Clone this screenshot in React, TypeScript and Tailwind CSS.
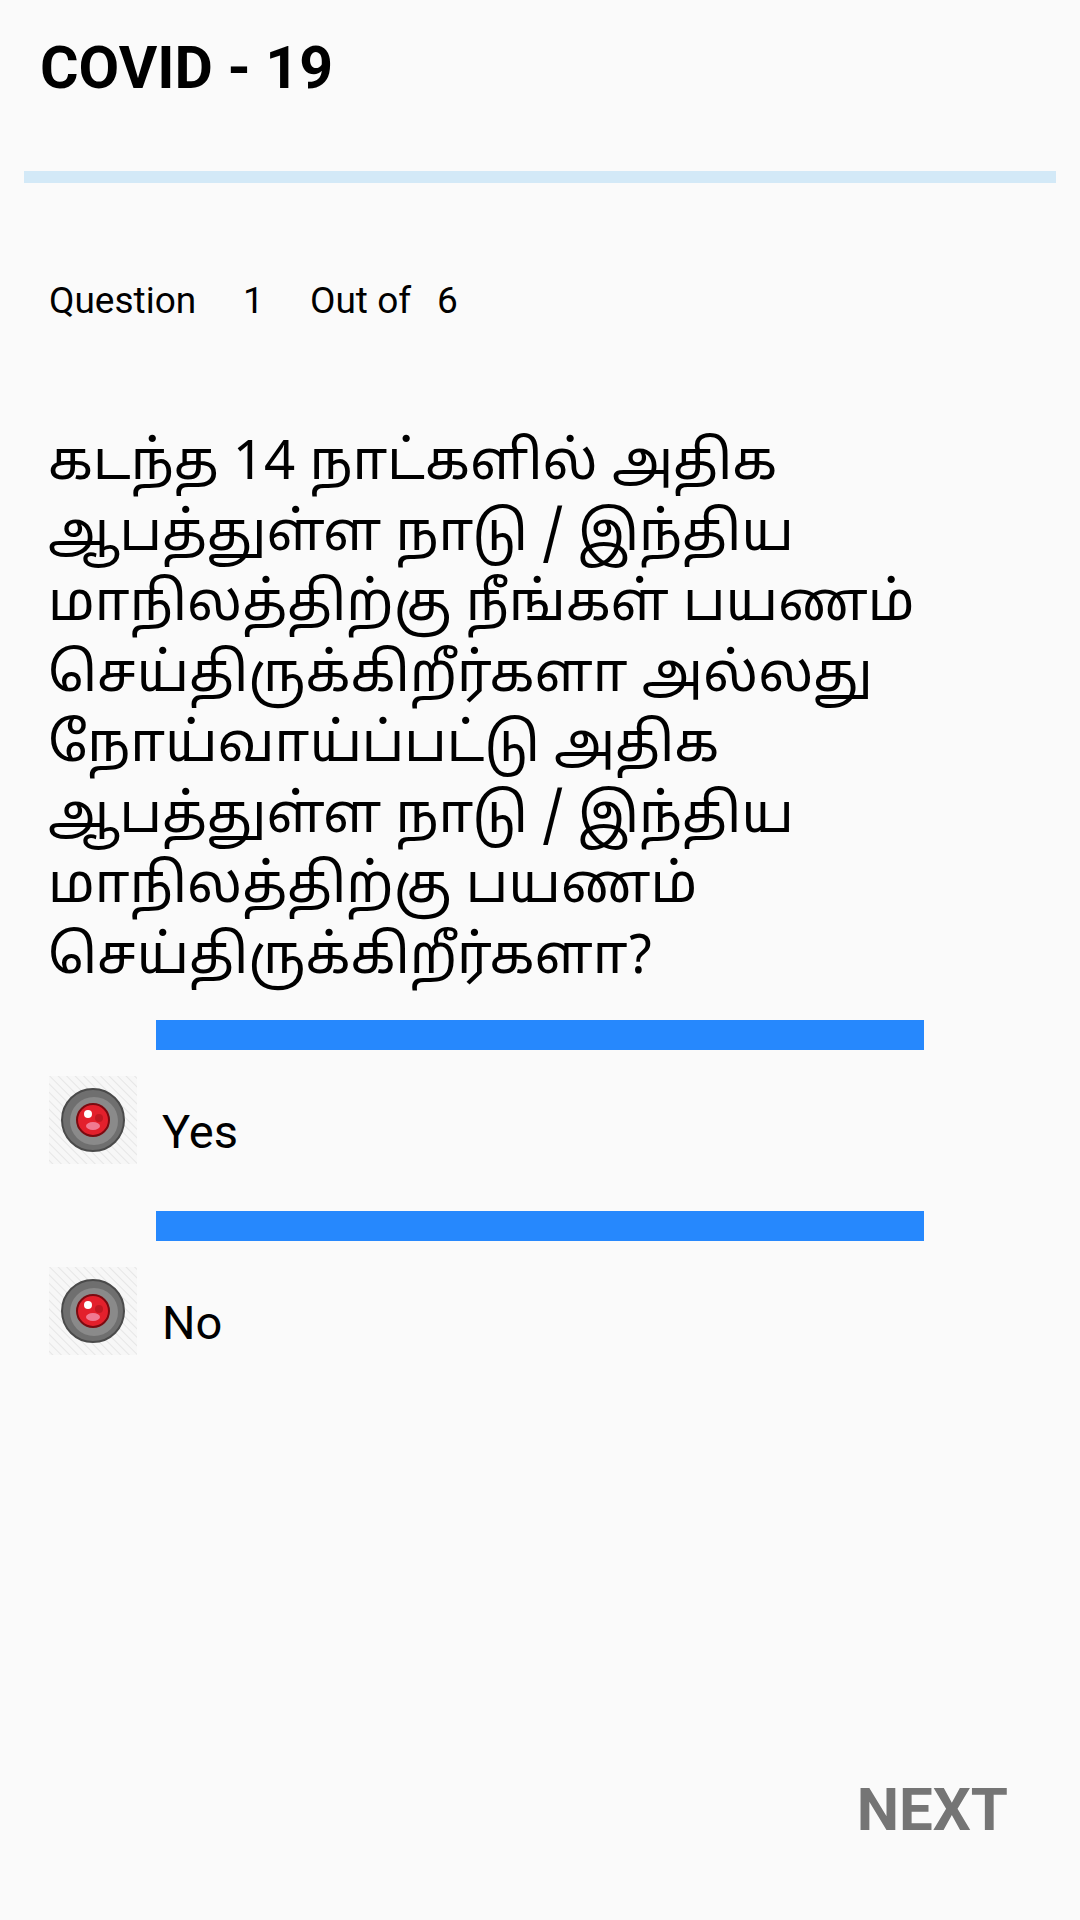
import React, { useState } from 'react';

const lines = [
  'கடந்த 14 நாட்களில் அதிக',
  'ஆபத்துள்ள நாடு / இந்திய',
  'மாநிலத்திற்கு நீங்கள் பயணம்',
  'செய்திருக்கிறீர்களா அல்லது',
  'நோய்வாய்ப்பட்டு அதிக',
  'ஆபத்துள்ள நாடு / இந்திய',
  'மாநிலத்திற்கு பயணம்',
  'செய்திருக்கிறீர்களா?',
];

const RadioIcon: React.FC<{ id: string }> = ({ id }) => (
  <svg width="88" height="88" viewBox="0 0 88 88">
    <defs>
      <pattern id={`hatch-${id}`} width="6" height="6" patternUnits="userSpaceOnUse" patternTransform="rotate(-45)">
        <rect width="6" height="6" fill="#f7f7f7" />
        <line x1="0" y1="0" x2="0" y2="6" stroke="#e6e6e6" strokeWidth="2" />
      </pattern>
    </defs>
    <rect width="88" height="88" fill={`url(#hatch-${id})`} />
    <circle cx="44" cy="44" r="31" fill="#6f6f6f" stroke="#4a4a4a" strokeWidth="2" />
    <circle cx="45" cy="45" r="24" fill="#8a8a8a" />
    <circle cx="44" cy="44" r="16" fill="#e3202c" stroke="#7a0a10" strokeWidth="2" />
    <circle cx="50" cy="42" r="4" fill="#c01822" />
    <ellipse cx="44" cy="50" rx="7" ry="4" fill="#f07a92" />
    <circle cx="39" cy="38" r="4" fill="#ffffff" />
  </svg>
);

const App: React.FC = () => {
  const [answer, setAnswer] = useState<string | null>(null);
  const options = ['Yes', 'No'];

  return (
    <div className="w-[1080px] min-h-[1920px] bg-[#fafafa] flex flex-col font-['Roboto',sans-serif] text-black">
      {/* Header */}
      <h1 className="pl-10 pt-[33px] text-[59px] font-bold leading-[69px]">COVID - 19</h1>
      <div className="mx-6 mt-[69px] h-3 bg-[#d3e9f7]" />

      {/* Question counter */}
      <div className="mt-[96px] ml-[49px] flex text-[37px] leading-[43px]">
        <span className="w-[194px]">Question</span>
        <span className="w-[67px]">1</span>
        <span className="w-[127px]">Out of</span>
        <span>6</span>
      </div>

      {/* Question text */}
      <div className="mt-[109px] ml-12 text-[54.5px] leading-[70.5px] font-['Noto_Sans_Tamil','Noto_Sans',sans-serif]">
        {lines.map((l, i) => (
          <div key={i} className="whitespace-nowrap">{l}</div>
        ))}
      </div>

      {/* Options */}
      <div className="mt-[25px] flex flex-col">
        {options.map((o) => (
          <div key={o} className="flex flex-col">
            <div className="ml-[156px] w-[768px] h-[30px] bg-[#2688fd]" />
            <button onClick={() => setAnswer(o)} className="mt-[26px] mb-[47px] ml-[49px] flex text-left">
              <RadioIcon id={o} />
              <span className={`ml-[25px] mt-[28px] text-[47px] leading-[55px] ${answer === o ? 'font-medium' : ''}`}>{o}</span>
            </button>
          </div>
        ))}
      </div>

      {/* Footer */}
      <div className="mt-auto flex justify-end pr-[72px] pb-[75px]">
        <button className="text-[60px] font-bold leading-[70px] text-[#757575]">NEXT</button>
      </div>
    </div>
  );
};

export default App;
